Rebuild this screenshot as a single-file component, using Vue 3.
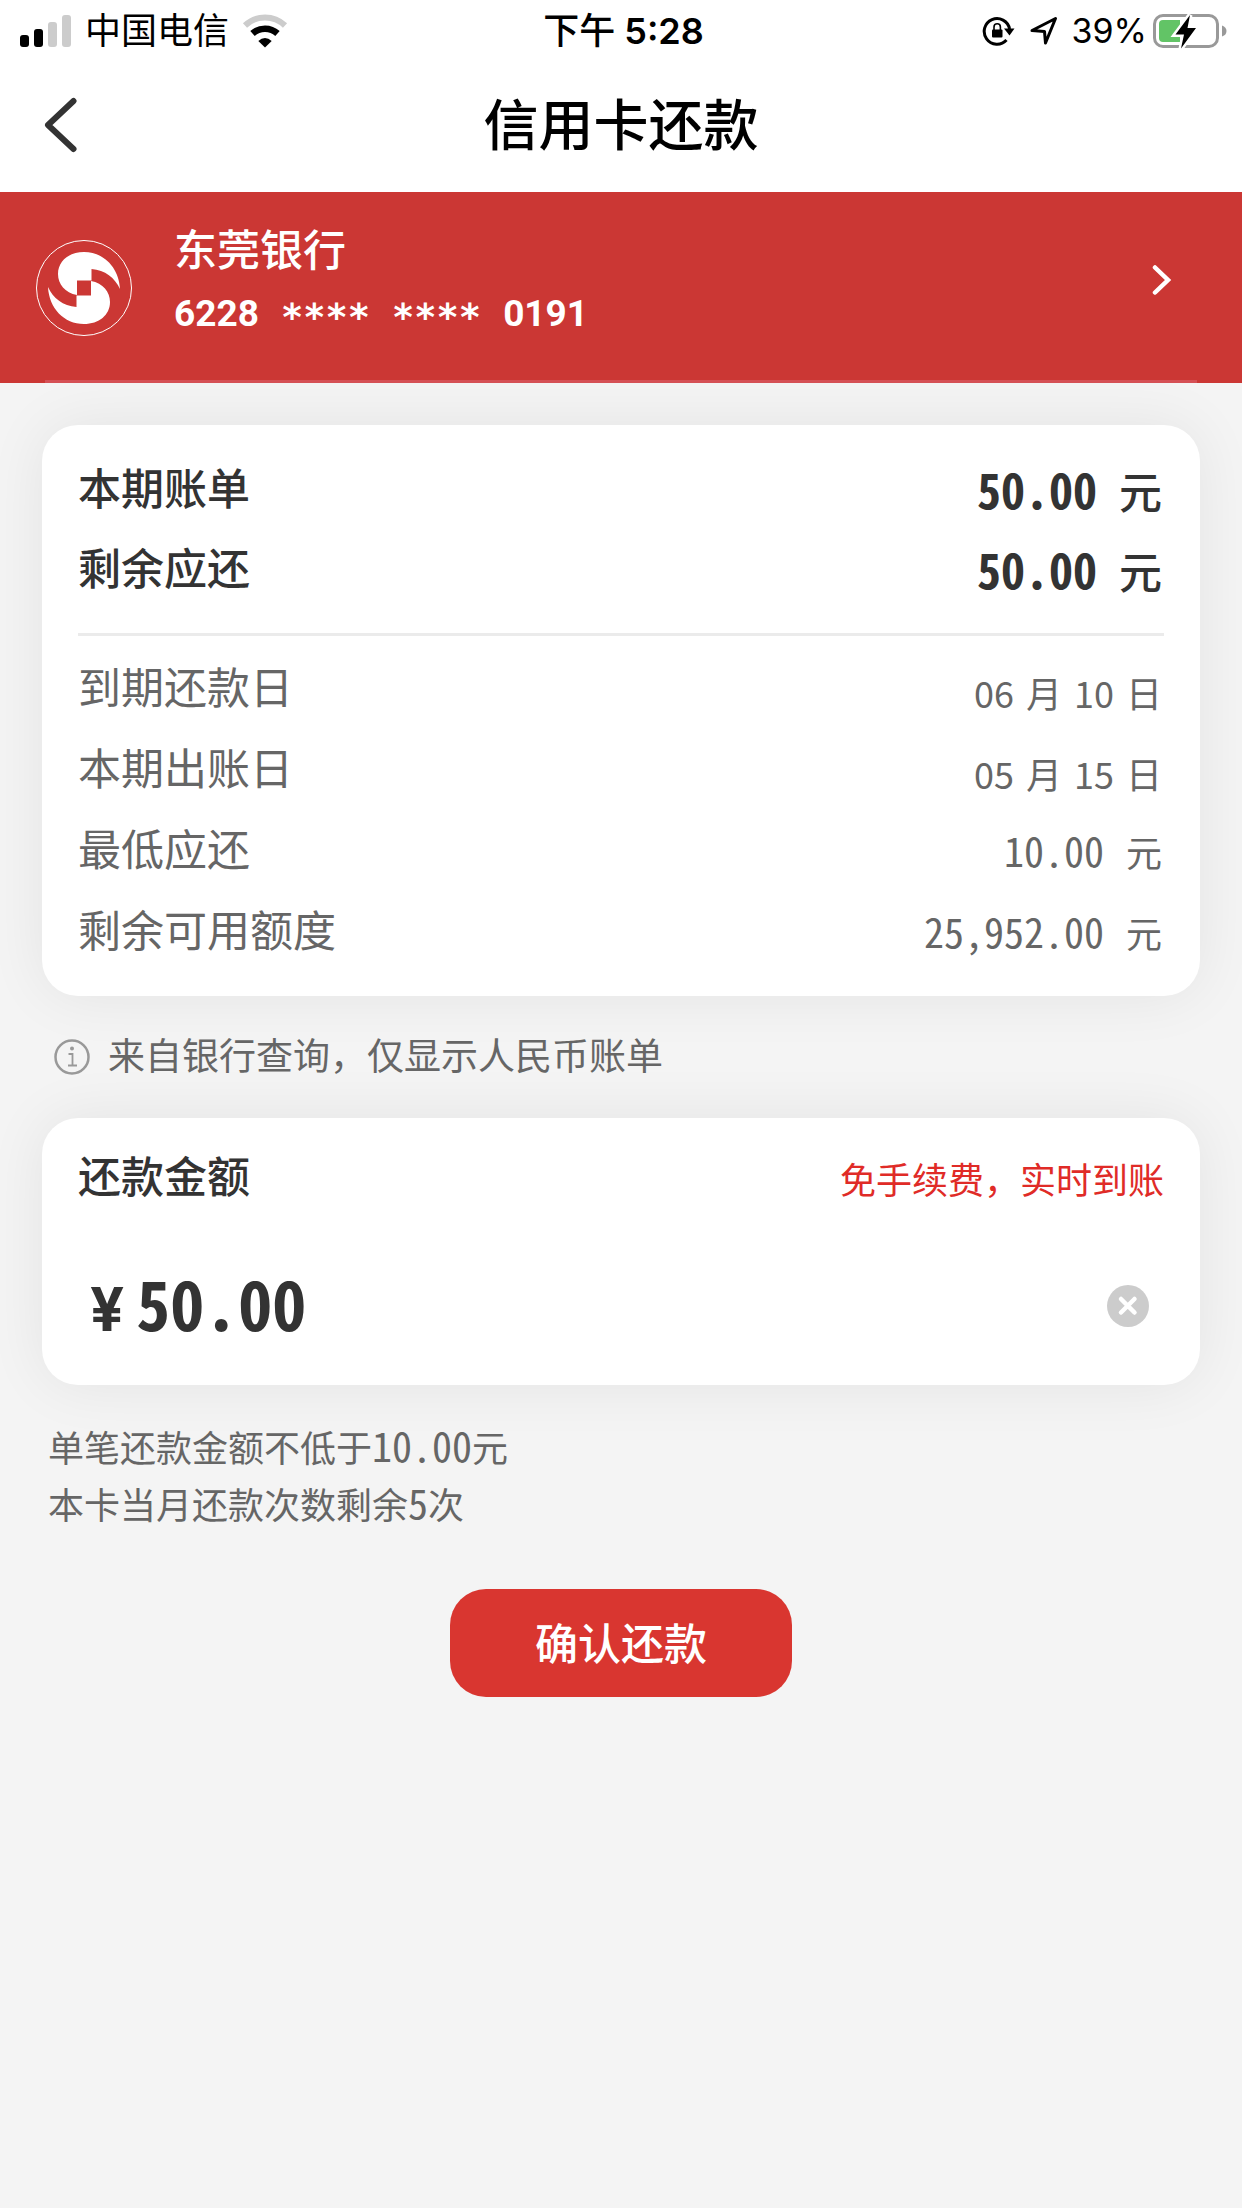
<template>
  <div class="page">
    <div class="status-bar">
      <div class="status-left">
        <svg class="signal" width="52" height="34" viewBox="0 0 52 34">
          <rect x="0" y="21" width="9" height="12" rx="3" fill="#000" />
          <rect x="14" y="15" width="9" height="18" rx="3" fill="#000" />
          <rect x="28" y="8" width="9" height="25" rx="3" fill="#ccc" />
          <rect x="42" y="1" width="9" height="32" rx="3" fill="#ccc" />
        </svg>
        <span>中国电信</span>
        <svg class="wifi" width="46" height="34" viewBox="0 0 46 34">
          <path d="M3 11.5 A29 29 0 0 1 43 11.5" fill="none" stroke="#ccc" stroke-width="6" />
          <path d="M10.5 19.5 A18.5 18.5 0 0 1 35.5 19.5" fill="none" stroke="#000" stroke-width="6.5" />
          <path d="M23 33.5 L16.3 27 Q23 21 29.7 27 Z" fill="#000" />
        </svg>
      </div>
      <div class="status-time"><span>下午</span> 5:28</div>
      <div class="status-right">
        <svg class="lock" width="33" height="32" viewBox="0 0 33 32">
          <path d="M27.6 14 A12.8 12.8 0 1 0 24.5 25" fill="none" stroke="#000" stroke-width="3" />
          <path d="M22 13.5 H32.5 L27.5 20.5 Z" fill="#000" />
          <rect x="10" y="14.5" width="10.5" height="8" rx="1" fill="#000" />
          <path d="M12 15 V12 a3.2 3.2 0 0 1 6.4 0 V15" fill="none" stroke="#000" stroke-width="1.6" />
        </svg>
        <svg class="arrow" width="28" height="30" viewBox="0 0 28 30">
          <path d="M2 14.5 L25.5 2.5 L15.5 27 L14.5 15.5 Z" fill="none" stroke="#000" stroke-width="3" stroke-linejoin="round" />
        </svg>
        <span class="percent">39%</span>
        <svg class="battery" width="74" height="36" viewBox="0 0 74 36">
          <rect x="1.5" y="2.5" width="63" height="31" rx="8.5" fill="none" stroke="#999" stroke-width="3" />
          <path d="M69 12.5 q4.5 1.5 4.5 5.5 t-4.5 5.5z" fill="#999" />
          <path d="M10 7 H27 V29 H10 q-4 0 -4 -4 V11 q0 -4 4 -4z" fill="#62c466" />
          <path d="M37 2 L22.5 21.5 H31 L28 35.5 L43 15 H34.5 Z" fill="#000" stroke="#fff" stroke-width="5" paint-order="stroke" />
        </svg>
      </div>
    </div>

    <header class="nav-bar">
      <button class="back-btn" type="button" aria-label="返回">
        <svg width="34" height="56" viewBox="0 0 34 56">
          <path d="M29.5 4 L4 28 L29.5 52" fill="none" stroke="#333" stroke-width="6" stroke-linecap="round" stroke-linejoin="round" />
        </svg>
      </button>
      <h1 class="nav-title">信用卡还款</h1>
    </header>

    <button class="bank" type="button">
      <svg class="bank-logo" width="96" height="96" viewBox="0 0 96 96">
        <circle cx="48" cy="48" r="47.5" fill="none" stroke="#fff" stroke-width="1" />
        <path :d="logoPath" fill="#fff" />
        <path :d="logoPath" fill="#fff" transform="rotate(180 48 48)" />
      </svg>
      <span class="bank-info">
        <span class="bank-name">东莞银行</span>
        <span class="bank-number">
          <span>6228</span>
          <span class="stars">****</span>
          <span class="stars">****</span>
          <span>0191</span>
        </span>
      </span>
      <svg class="bank-arrow" width="20" height="32" viewBox="0 0 20 32">
        <path d="M3 3.5 L16 16 L3 28.5" fill="none" stroke="#fff" stroke-width="4.5" stroke-linecap="round" />
      </svg>
    </button>

    <main class="content">
      <section class="card bill-card">
        <dl class="rows rows-main">
          <div v-for="row in mainRows" :key="row.label" class="row">
            <dt>{{ row.label }}</dt>
            <dd><span class="num">{{ row.amount }}</span>元</dd>
          </div>
        </dl>
        <dl class="rows">
          <div v-for="row in detailRows" :key="row.label" class="row">
            <dt>{{ row.label }}</dt>
            <dd v-if="row.date" class="date">
              <span v-for="(part, index) in row.date" :key="index">{{ part }}</span>
            </dd>
            <dd v-else><span class="num">{{ row.amount }}</span>元</dd>
          </div>
        </dl>
      </section>

      <p class="tip">
        <svg width="36" height="36" viewBox="0 0 36 36">
          <circle cx="18" cy="18" r="16.5" fill="none" stroke="#999" stroke-width="2.5" />
          <circle cx="18" cy="9.5" r="2" fill="#999" />
          <path d="M14.5 15 H18.5 V26.5 M14 26.5 H23" fill="none" stroke="#999" stroke-width="1.8" />
        </svg>
        <span>来自银行查询，仅显示人民币账单</span>
      </p>

      <section class="card pay-card">
        <div class="pay-head">
          <label for="amount">还款金额</label>
          <span class="pay-note">免手续费，实时到账</span>
        </div>
        <div class="pay-field">
          <span class="yen">¥</span>
          <input id="amount" v-model="amount" class="pay-input" type="text" inputmode="decimal" />
          <button class="clear-btn" type="button" aria-label="清除" @click="amount = ''">
            <svg width="42" height="42" viewBox="0 0 42 42">
              <circle cx="21" cy="21" r="21" fill="#ccc" />
              <path d="M14 14 L27.5 27.5 M27.5 14 L14 27.5" stroke="#fff" stroke-width="4.5" stroke-linecap="round" />
            </svg>
          </button>
        </div>
      </section>

      <div class="hints">
        <p>单笔还款金额不低于<span class="num">10.00</span>元</p>
        <p>本卡当月还款次数剩余<span class="num">5</span>次</p>
      </div>

      <button class="submit-btn" type="button">确认还款</button>
    </main>
  </div>
</template>

<script setup>
import { ref } from 'vue'

const amount = ref('50.00')

const mainRows = [
  { label: '本期账单', amount: '50.00' },
  { label: '剩余应还', amount: '50.00' }
]

const detailRows = [
  { label: '到期还款日', date: ['06', '月', '10', '日'] },
  { label: '本期出账日', date: ['05', '月', '15', '日'] },
  { label: '最低应还', amount: '10.00' },
  { label: '剩余可用额度', amount: '25,952.00' }
]

// One half of the bank logo, the other half is the same shape rotated
const logoPath = 'M41 55 C29 53 22 44 22 34 C22 21 33 12 48 12 C68 12 83 28 84 49 C79 38 69 30 55.5 29 V40.5 H41 Z'
</script>

<style>
body {
  margin: 0;
  background: #f4f4f4;
}
</style>

<style scoped>
.page {
  min-height: 100vh;
  background: #f4f4f4;
  color: #333;
  font-family: Inter, "Noto Sans CJK SC", sans-serif;
}

button {
  padding: 0;
  border: none;
  background: none;
  color: inherit;
  font-family: inherit;
  cursor: pointer;
}

svg {
  display: block;
  flex-shrink: 0;
}

p, dl, dd, h1 { margin: 0; }

.num,
.pay-input {
  font-family: "Noto Sans Mono CJK SC", "DejaVu Sans Mono", monospace;
}

.num {
  font-size: 40px;
  line-height: 1;
}

/* --- Status bar --- */
.status-bar {
  display: grid;
  grid-template-columns: 1fr auto 1fr;
  align-items: center;
  height: 62px;
  padding: 0 15px 0 20px;
  background: #fff;
  color: #000;
  font-size: 36px;
  line-height: 60px;
}

.status-left,
.status-right {
  display: flex;
  align-items: center;
}

.status-left { gap: 13px; }
.status-right { justify-content: flex-end; }
.status-time { font-weight: 600; }
.status-time span { font-weight: 500; }
.percent { font-size: 34px; }
.lock { margin-right: 15px; }
.arrow { margin-right: 14px; }
.battery { margin-left: 6px; }

/* --- Title --- */
.nav-bar {
  box-sizing: border-box;
  display: grid;
  grid-template-columns: 1fr auto 1fr;
  align-items: center;
  height: 130px;
  padding: 0 44px 4px;
  background: #fff;
}

.back-btn { justify-self: start; }

.nav-title {
  color: #000;
  font-size: 55px;
  font-weight: 500;
  line-height: 80px;
}

/* --- Bank --- */
.bank {
  position: relative;
  display: flex;
  align-items: center;
  width: 100%;
  height: 191px;
  padding: 0 70px 0 36px;
  background: #cb3734;
  color: #fff;
  text-align: left;
}

.bank::after {
  content: "";
  position: absolute;
  left: 45px;
  right: 45px;
  bottom: 0;
  height: 3px;
  background: #d55055;
}

.bank-info {
  display: flex;
  flex: 1;
  flex-direction: column;
  margin-left: 42px;
  padding-bottom: 14px;
}

.bank-name {
  font-size: 43px;
  font-weight: 500;
  line-height: 66px;
}

.bank-number {
  display: flex;
  gap: 22px;
  font-family: Roboto, sans-serif;
  font-size: 37px;
  font-weight: 700;
  line-height: 62px;
}

.stars {
  padding-top: 4px;
  margin-bottom: -4px;
  font-family: "DejaVu Sans Mono", monospace;
}

.bank-arrow { margin-bottom: 16px; }

/* --- Cards --- */
.content {
  display: flex;
  flex-direction: column;
  padding: 42px;
}

.card {
  border-radius: 36px;
  background: #fff;
  box-shadow: 0 0 60px rgba(0, 0, 0, 0.07);
}

.bill-card { padding: 24px 36px; }

.row {
  display: flex;
  justify-content: space-between;
  padding-right: 2px;
  color: #666;
  line-height: 81px;
}

.row dt { font-size: 43px; }

.row dd {
  padding-top: 4px;
  margin-bottom: -4px;
  font-size: 36px;
}

.row .num { margin-right: 22px; }

.row .date {
  display: flex;
  gap: 12px;
  font-family: "Noto Sans CJK SC", sans-serif;
}

.rows-main {
  margin-bottom: 12px;
  padding-bottom: 24px;
  border-bottom: 3px solid #ebebeb;
}

.rows-main .row {
  color: #333;
  line-height: 80px;
}

.rows-main dt { font-weight: 500; }

.rows-main dd {
  font-size: 43px;
  font-weight: 500;
}

.rows-main .num {
  font-size: 48px;
  font-weight: 700;
}

.tip {
  display: flex;
  align-items: center;
  gap: 18px;
  padding: 31px 12px;
  color: #666;
  font-size: 37px;
  line-height: 60px;
}

.pay-card { padding: 24px 36px 37px; }

.pay-head {
  display: flex;
  justify-content: space-between;
  font-size: 43px;
  font-weight: 500;
  line-height: 70px;
}

.pay-note {
  padding-top: 4px;
  color: #e02b27;
  font-size: 36px;
  font-weight: 400;
}

.pay-field {
  display: flex;
  align-items: baseline;
  height: 84px;
  margin-top: 48px;
  padding: 0 15px 0 12px;
  font-weight: 700;
}

.yen {
  margin-right: 12px;
  font-size: 60px;
  line-height: 74px;
}

.pay-input {
  flex: 1;
  min-width: 0;
  height: 74px;
  padding: 0;
  border: none;
  outline: none;
  background: none;
  color: inherit;
  font-size: 68px;
  font-weight: 700;
}

.clear-btn { align-self: center; }

.hints {
  padding: 36px 6px 30px;
  color: #666;
  font-size: 36px;
  line-height: 57px;
}

.submit-btn {
  align-self: center;
  min-width: 342px;
  height: 108px;
  margin-top: 24px;
  padding-bottom: 4px;
  border-radius: 36px;
  background: #d93630;
  color: #fff;
  font-size: 43px;
  font-weight: 500;
}
</style>
